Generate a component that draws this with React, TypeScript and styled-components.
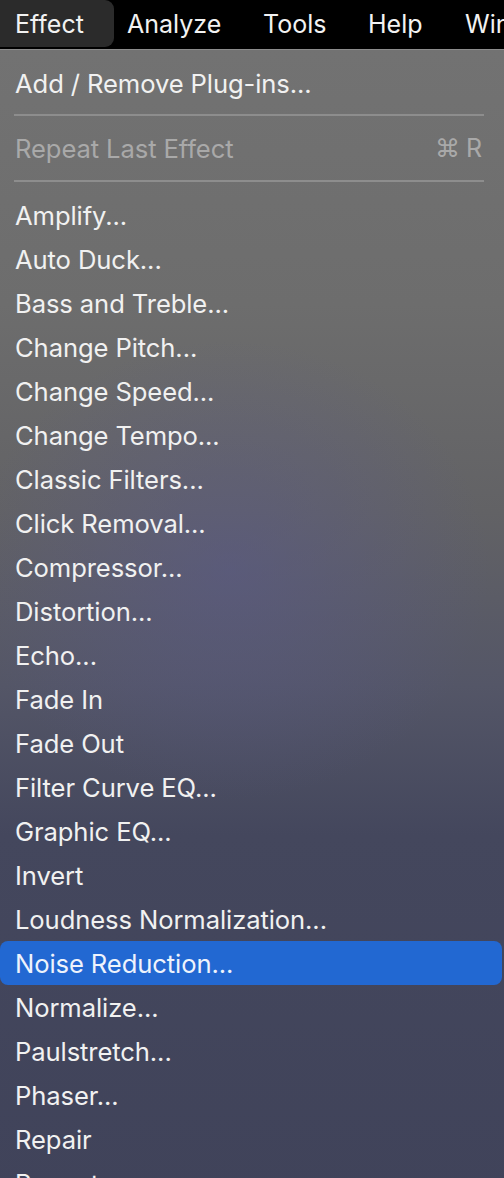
import React from "react";
import styled, { createGlobalStyle } from "styled-components";

const GlobalStyle = createGlobalStyle`
    html, body {
        margin: 0;
        padding: 0;
        background: #000;
    }
    body {
        width: 504px;
        height: 1178px;
        overflow: hidden;
        font-family: Inter, "Noto Sans", "Liberation Sans", sans-serif;
        -webkit-font-smoothing: antialiased;
    }
`;

const Screen = styled.div`
    display: flex;
    flex-direction: column;
    width: 504px;
    height: 1178px;
    overflow: hidden;
`;

const MenuBar = styled.div`
    display: flex;
    align-items: center;
    height: 47px;
    padding-bottom: 2px;
    background: #000;
    flex-shrink: 0;
    overflow: hidden;
`;

const BarItem = styled.div<{ $active?: boolean; $width: number; $pad: number }>`
    display: flex;
    align-items: center;
    flex-shrink: 0;
    box-sizing: border-box;
    height: 47px;
    width: ${(p) => p.$width}px;
    padding-left: ${(p) => p.$pad}px;
    font-size: 25px;
    color: #f2f2f2;
    white-space: nowrap;
    background: ${(p) => (p.$active ? "#2b2b2b" : "transparent")};
    border-radius: 0 9px 9px 0;
`;

const Dropdown = styled.div`
    flex: 1;
    box-sizing: border-box;
    padding-top: 11px;
    border-top: 1px solid #8c8c8c;
    background:
        radial-gradient(ellipse 260px 230px at 230px 520px, rgba(88, 88, 138, 0.55), rgba(88, 88, 138, 0) 100%),
        linear-gradient(to bottom, #727272 0%, #6d6d6d 22%, #626265 40%, #545667 55%, #44475d 68%, #40435a 100%);
`;

const Item = styled.div<{ $selected?: boolean; $disabled?: boolean }>`
    display: flex;
    align-items: center;
    justify-content: space-between;
    height: 44px;
    padding: 0 20px 0 15px;
    font-size: 25.6px;
    letter-spacing: -0.1px;
    color: ${(p) => (p.$disabled ? "#a9a9a9" : p.$selected ? "#eef3fc" : "#f1f1f1")};
    background: ${(p) => (p.$selected ? "#2268d2" : "transparent")};
    border-radius: 8px;
    margin-right: 2px;
    white-space: nowrap;
`;

const Shortcut = styled.span`
    display: flex;
    align-items: center;
    gap: 6px;
    font-size: 25px;
`;

const Separator = styled.div<{ $top: number; $bottom: number }>`
    height: 2px;
    margin: ${(p) => p.$top}px 20px ${(p) => p.$bottom}px 14px;
    background: #8d8d8d;
`;

const effects = [
    "Amplify...",
    "Auto Duck...",
    "Bass and Treble...",
    "Change Pitch...",
    "Change Speed...",
    "Change Tempo...",
    "Classic Filters...",
    "Click Removal...",
    "Compressor...",
    "Distortion...",
    "Echo...",
    "Fade In",
    "Fade Out",
    "Filter Curve EQ...",
    "Graphic EQ...",
    "Invert",
    "Loudness Normalization...",
    "Noise Reduction...",
    "Normalize...",
    "Paulstretch...",
    "Phaser...",
    "Repair",
    "Repeat...",
];

const menus = [
    { label: "Effect", width: 114, pad: 15 },
    { label: "Analyze", width: 136, pad: 13 },
    { label: "Tools", width: 105, pad: 13 },
    { label: "Help", width: 97, pad: 13 },
    { label: "Window", width: 120, pad: 13 },
];

const App = () => {
    return (
        <Screen>
            <GlobalStyle />
            <MenuBar>
                {menus.map((m) => (
                    <BarItem key={m.label} $width={m.width} $pad={m.pad} $active={m.label === "Effect"}>
                        {m.label}
                    </BarItem>
                ))}
            </MenuBar>
            <Dropdown>
                <Item>Add / Remove Plug-ins...</Item>
                <Separator $top={9} $bottom={10} />
                <Item $disabled>
                    <span>Repeat Last Effect</span>
                    <Shortcut>
                        <span>⌘</span>
                        <span>R</span>
                    </Shortcut>
                </Item>
                <Separator $top={10} $bottom={11} />
                {effects.map((e) => (
                    <Item key={e} $selected={e === "Noise Reduction..."}>
                        {e}
                    </Item>
                ))}
            </Dropdown>
        </Screen>
    );
};

export default App;
